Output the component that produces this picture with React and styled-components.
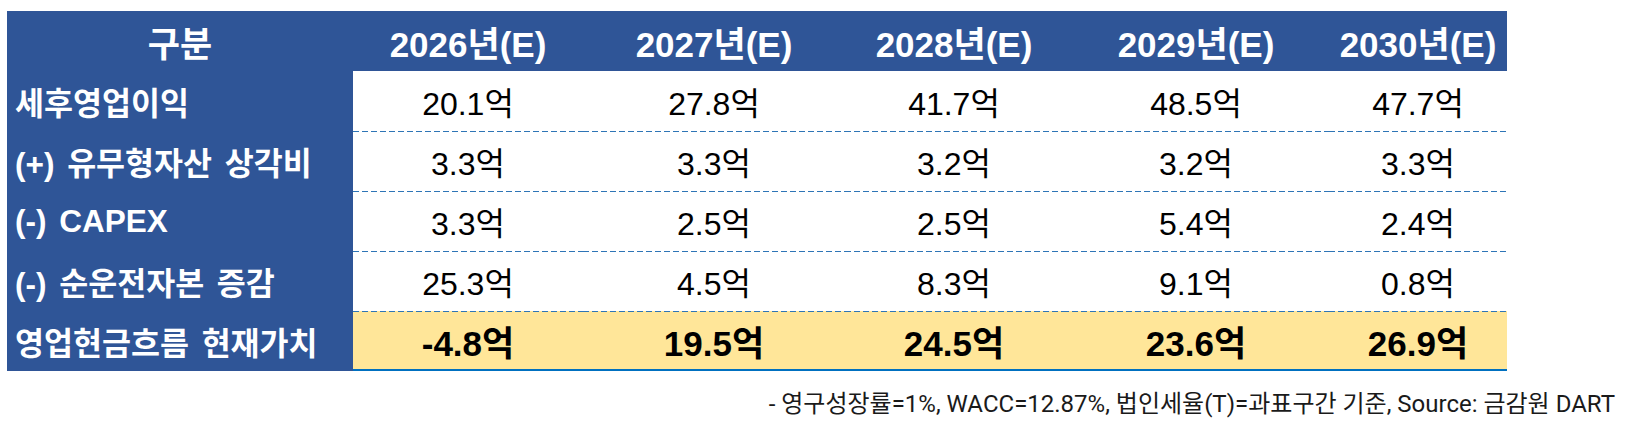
import React from 'react';
import styled, { createGlobalStyle } from 'styled-components';

const GlobalStyle = createGlobalStyle`
  body {
    margin: 0;
    background: #ffffff;
  }
`;

const years = ['2026년(E)', '2027년(E)', '2028년(E)', '2029년(E)', '2030년(E)'];

const rows = [
  { label: '세후영업이익', values: ['20.1억', '27.8억', '41.7억', '48.5억', '47.7억'] },
  { label: '(+) 유무형자산 상각비', values: ['3.3억', '3.3억', '3.2억', '3.2억', '3.3억'] },
  { label: '(-) CAPEX', values: ['3.3억', '2.5억', '2.5억', '5.4억', '2.4억'] },
  { label: '(-) 순운전자본 증감', values: ['25.3억', '4.5억', '8.3억', '9.1억', '0.8억'] },
];

const total = { label: '영업현금흐름 현재가치', values: ['-4.8억', '19.5억', '24.5억', '23.6억', '26.9억'] };

const cols = '346px 230px 262px 218px 266px 178px';

const Page = styled.div`
  padding: 11px 0 0 7px;
  font-family: "Liberation Sans", "Noto Sans CJK KR", sans-serif;
`;

const Table = styled.div`
  width: 1500px;
  display: flex;
  flex-direction: column;
`;

const Row = styled.div`
  display: grid;
  grid-template-columns: ${cols};
  height: 60px;
  background: ${p => (p.$head ? '#2f5597' : 'transparent')};
`;

const HeadCell = styled.div`
  display: flex;
  align-items: center;
  justify-content: center;
  color: #ffffff;
  font-weight: 700;
  font-size: 35px;
`;

const Label = styled.div`
  display: flex;
  align-items: center;
  padding-left: 8px;
  background: #2f5597;
  color: #ffffff;
  font-weight: 700;
  font-size: 31.5px;
  word-spacing: 4px;
  white-space: nowrap;
`;

const Cell = styled.div`
  display: flex;
  align-items: center;
  justify-content: center;
  color: #000000;
  font-size: ${p => (p.$total ? '35px' : '32px')};
  font-weight: ${p => (p.$total ? 700 : 400)};
  background-color: ${p => (p.$total ? '#ffe699' : '#ffffff')};
  background-image: ${p =>
    p.$first
      ? 'none'
      : 'repeating-linear-gradient(90deg, #2e75b6 0 6px, transparent 6px 9px)'};
  background-size: 100% 1px;
  background-repeat: no-repeat;
  border-bottom: ${p => (p.$total ? '2px solid #0070c0' : 'none')};
`;

const Note = styled.div`
  width: 1608px;
  margin-top: 13px;
  text-align: right;
  font-family: Roboto, "Noto Sans CJK KR", sans-serif;
  font-size: 24px;
  color: #1a1a1a;
`;

export default function App() {
  return (
    <Page>
      <GlobalStyle />
      <Table>
        <Row $head>
          <HeadCell>구분</HeadCell>
          {years.map(y => (
            <HeadCell key={y}>{y}</HeadCell>
          ))}
        </Row>
        {rows.map((r, i) => (
          <Row key={r.label}>
            <Label>{r.label}</Label>
            {r.values.map((v, j) => (
              <Cell key={j} $first={i === 0}>{v}</Cell>
            ))}
          </Row>
        ))}
        <Row>
          <Label>{total.label}</Label>
          {total.values.map((v, j) => (
            <Cell key={j} $total>{v}</Cell>
          ))}
        </Row>
      </Table>
      <Note>- 영구성장률=1%, WACC=12.87%, 법인세율(T)=과표구간 기준, Source: 금감원 DART</Note>
    </Page>
  );
}
